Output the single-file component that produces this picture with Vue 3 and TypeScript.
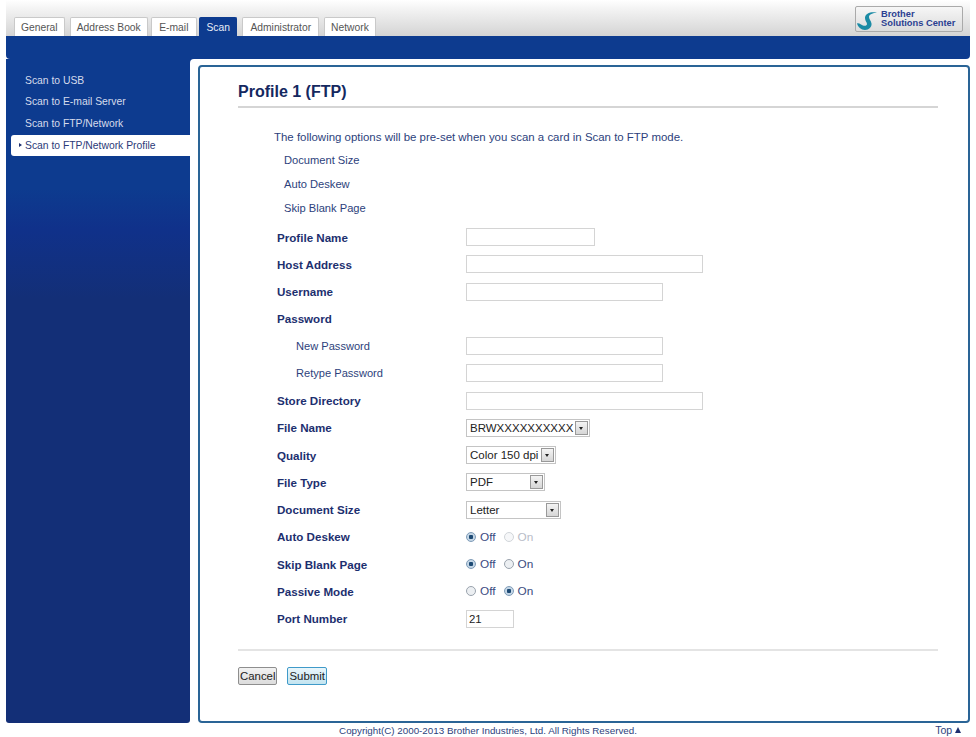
<script setup lang="ts">
const tabs = ['General', 'Address Book', 'E-mail', 'Scan', 'Administrator', 'Network']
const menu = ['Scan to USB', 'Scan to E-mail Server', 'Scan to FTP/Network', 'Scan to FTP/Network Profile']
const presets = ['Document Size', 'Auto Deskew', 'Skip Blank Page']

// one row per form field
type Row = {
  label: string
  kind: 'input' | 'select' | 'radio' | 'head'
  indent?: boolean
  width?: number
  value?: string
  on?: boolean
  onDisabled?: boolean
}

const rows: Row[] = [
  { label: 'Profile Name', kind: 'input', width: 129 },
  { label: 'Host Address', kind: 'input', width: 237 },
  { label: 'Username', kind: 'input', width: 197 },
  { label: 'Password', kind: 'head' },
  { label: 'New Password', kind: 'input', width: 197, indent: true },
  { label: 'Retype Password', kind: 'input', width: 197, indent: true },
  { label: 'Store Directory', kind: 'input', width: 237 },
  { label: 'File Name', kind: 'select', width: 124, value: 'BRWXXXXXXXXXX' },
  { label: 'Quality', kind: 'select', width: 90, value: 'Color 150 dpi' },
  { label: 'File Type', kind: 'select', width: 79, value: 'PDF' },
  { label: 'Document Size', kind: 'select', width: 95, value: 'Letter' },
  { label: 'Auto Deskew', kind: 'radio', on: false, onDisabled: true },
  { label: 'Skip Blank Page', kind: 'radio', on: false },
  { label: 'Passive Mode', kind: 'radio', on: true },
  { label: 'Port Number', kind: 'input', width: 48, value: '21' },
]
</script>

<template>
  <div class="page">
    <header class="top">
      <nav class="tabs">
        <span v-for="tab in tabs" :key="tab" class="tab" :class="{ active: tab === 'Scan' }">{{ tab }}</span>
      </nav>
      <div class="solutions">
        <svg class="swan" width="22" height="20" viewBox="0 0 22 20">
          <path d="M20 1.5 C14 0.5 8 2 8 7 C8 10 10 11 10 13 C10 15 7 15.5 4 13.5 C2.5 12.5 1 12 0 12.5 C1 16 4 19 8 19 C12 19 15 16 14.5 12.5 C14 9.5 12 8 12 6 C12 3.5 16 2 20 1.5 Z" fill="#1b8ba5" />
        </svg>
        <span class="solutions-text">Brother<br />Solutions Center</span>
      </div>
    </header>
    <div class="bluebar"></div>

    <div class="main">
      <aside class="side">
        <ul class="menu">
          <li v-for="item in menu" :key="item" :class="{ current: item === 'Scan to FTP/Network Profile' }">{{ item }}</li>
        </ul>
      </aside>
      <div class="gutter">
        <section class="panel">
          <h1>Profile 1 (FTP)</h1>
          <p class="intro">The following options will be pre-set when you scan a card in Scan to FTP mode.</p>
          <p v-for="p in presets" :key="p" class="preset">{{ p }}</p>

          <div class="form">
            <div v-for="row in rows" :key="row.label" class="row">
              <label :class="{ sub: row.indent }">{{ row.label }}</label>
              <input v-if="row.kind === 'input'" class="field" type="text" :value="row.value" :style="{ width: row.width + 'px' }" />
              <div v-else-if="row.kind === 'select'" class="select" :style="{ width: row.width + 'px' }">
                <span class="select-text">{{ row.value }}</span>
                <span class="arrow"></span>
              </div>
              <div v-else-if="row.kind === 'radio'" class="radios">
                <span class="radio" :class="{ checked: !row.on }"></span>
                <span class="radio-label">Off</span>
                <span class="radio second" :class="{ checked: row.on, disabled: row.onDisabled }"></span>
                <span class="radio-label" :class="{ disabled: row.onDisabled }">On</span>
              </div>
            </div>
          </div>

          <div class="actions">
            <button class="btn" type="button">Cancel</button>
            <button class="btn primary" type="button">Submit</button>
          </div>
        </section>
      </div>
    </div>

    <footer class="foot">
      <span class="copy">Copyright(C) 2000-2013 Brother Industries, Ltd. All Rights Reserved.</span>
      <span class="totop">Top <i></i></span>
    </footer>
  </div>
</template>

<style>
html,
body {
  margin: 0;
  background: #fff;
}
</style>

<style scoped>
.page {
  width: 976px;
  height: 737px;
  padding: 0 6px;
  box-sizing: border-box;
  overflow: hidden;
  font-family: 'Liberation Sans', Arial, sans-serif;
  font-size: 10.7px;
  color: #1d2f6f;
  background: #fff;
}

.top {
  height: 36px;
  display: flex;
  justify-content: space-between;
  background: linear-gradient(#fff 0%, #f1f1f1 30%, #d4d4d4 100%);
}

.tabs {
  display: flex;
  align-items: flex-end;
  padding-left: 8px;
  gap: 5px;
}

.tab {
  height: 18px;
  line-height: 19px;
  padding: 0 6px;
  background: #fff;
  border: 1px solid #c9c9c9;
  border-bottom: 0;
  border-radius: 2px 2px 0 0;
  color: #555;
  font-size: 10.3px;
}

.tab:nth-child(3) {
  margin-left: -2px;
  padding: 0 7.5px;
}

.tab:nth-child(4) {
  margin-left: -3px;
  padding: 0 6.5px;
}

.tab:nth-child(5) {
  padding: 0 7px;
}

.tab.active {
  background: #0d3b8f;
  border-color: #0d3b8f;
  color: #e8edf6;
}

.solutions {
  width: 108px;
  height: 26px;
  margin: 6px 7px 0 0;
  box-sizing: border-box;
  display: flex;
  align-items: center;
  gap: 2px;
  padding-left: 1px;
  background: linear-gradient(#f6f6f6, #dcdcdc);
  border: 1px solid #aaa;
  border-radius: 2px;
}

.swan {
  flex: none;
  margin-top: 3px;
}

.solutions-text {
  font-size: 9.3px;
  line-height: 9.5px;
  font-weight: bold;
  color: #2b3f91;
  white-space: nowrap;
}

.bluebar {
  height: 23px;
  background: #0d3b8f;
  border-radius: 0 0 4px 4px;
}

.main {
  display: flex;
  height: 664px;
  background: linear-gradient(#0d3b8f 8px, transparent 8px);
}

.side {
  width: 184px;
  height: 664px;
  padding-top: 10.5px;
  box-sizing: border-box;
  background: linear-gradient(#0d3b8f 0, #0d3b8f 130px, #10318a 170px, #132f77 240px, #132f77 100%);
  border-radius: 0 0 3px 3px;
}

.menu {
  list-style: none;
  margin: 0;
  padding: 0 0 0 5px;
  font-size: 10.35px;
}

.menu li {
  height: 21.7px;
  line-height: 21.7px;
  padding-left: 14px;
  color: #d6dcec;
}

.menu li.current {
  position: relative;
  background: #fff;
  color: #2b3a78;
  border-radius: 3px 0 0 3px;
}

.menu li.current::before {
  content: '';
  position: absolute;
  left: 8px;
  top: 8px;
  border-left: 3px solid #1d2f6f;
  border-top: 2.5px solid transparent;
  border-bottom: 2.5px solid transparent;
}

.gutter {
  flex: 1;
  padding: 6px 0 0 8px;
  background: #fff;
  border-top-left-radius: 4px;
}

.panel {
  height: 658px;
  box-sizing: border-box;
  border: 2px solid #2a6496;
  border-radius: 4px;
  padding: 0 30px 0 38px;
  color: #2d3f7c;
}

h1 {
  margin: 0;
  height: 41px;
  padding-top: 15px;
  box-sizing: border-box;
  font-size: 16px;
  line-height: 20px;
  font-weight: bold;
  color: #14285f;
  border-bottom: 2px solid #d5d5d5;
}

.intro {
  margin: 22px 0 -1.5px 36px;
  height: 14px;
  line-height: 14px;
  font-size: 11.45px;
}

.preset {
  margin: 10.3px 0 0 46px;
  height: 14px;
  line-height: 14px;
  font-size: 11.15px;
}

.form {
  margin-top: 8.1px;
}

.row {
  display: flex;
  align-items: center;
  height: 27.25px;
  padding-left: 39px;
}

.row label {
  width: 189px;
  flex: none;
  font-size: 11.6px;
  font-weight: bold;
  color: #1d2f6f;
}

.row label.sub {
  font-size: 11.1px;
  font-weight: normal;
  padding-left: 19px;
  width: 170px;
  color: #2d3f7c;
}

.field {
  height: 18px;
  box-sizing: border-box;
  padding: 2px 2px;
  border: 1px solid #d4d4d4;
  font: 11.4px 'Liberation Sans', Arial, sans-serif;
  color: #222;
  background: #fff;
  outline: none;
}

.select {
  height: 18px;
  box-sizing: border-box;
  display: flex;
  align-items: center;
  justify-content: space-between;
  padding: 0 1px 0 3px;
  border: 1px solid #c4c4c4;
  font-size: 11.5px;
  color: #222;
  background: #fff;
  white-space: nowrap;
}

.arrow {
  position: relative;
  flex: none;
  width: 13px;
  height: 14px;
  box-sizing: border-box;
  background: linear-gradient(#f4f4f4, #d6d6d6);
  border: 1px solid #999;
}

.arrow::after {
  content: '';
  position: absolute;
  left: 3px;
  top: 5px;
  border-top: 3px solid #222;
  border-left: 2.5px solid transparent;
  border-right: 2.5px solid transparent;
}

.radios {
  display: flex;
  align-items: center;
  font-size: 11.8px;
}

.radio {
  width: 10px;
  height: 10px;
  box-sizing: border-box;
  border: 1px solid #9aa3ad;
  border-radius: 50%;
  background: #eceff2;
}

.radio.checked {
  background: radial-gradient(circle, #1d4a74 0, #1d4a74 2px, #c4d6e6 2.5px);
  border-color: #7f9cb8;
}

.radio.disabled {
  opacity: 0.45;
}

.radio.second {
  margin-left: 8px;
}

.radio-label {
  margin-left: 4px;
  color: #3a4a80;
}

.radio-label.disabled {
  color: #b8bcc8;
}

.actions {
  margin-top: 16.5px;
  padding-top: 16px;
  border-top: 2px solid #e4e4e4;
  display: flex;
  gap: 10px;
}

.btn {
  height: 18px;
  padding: 0 1px;
  font: 11.4px 'Liberation Sans', Arial, sans-serif;
  color: #222;
  border: 1px solid #8e8e8e;
  border-radius: 2px;
  background: linear-gradient(#f2f2f2, #dcdcdc);
}

.btn.primary {
  border: 1px solid #3f9ac9;
  background: linear-gradient(#eaf6fb, #c3e4f0);
}

.foot {
  position: relative;
  height: 14px;
  display: flex;
  justify-content: center;
  padding-top: 1px;
  font-size: 9.8px;
  line-height: 13px;
  color: #2d3f7c;
}

.totop {
  position: absolute;
  right: 9px;
  top: 1px;
  font-size: 10.5px;
}

.totop i {
  display: inline-block;
  border-bottom: 6px solid #1d2f6f;
  border-left: 3.5px solid transparent;
  border-right: 3.5px solid transparent;
  vertical-align: 1px;
}
</style>
